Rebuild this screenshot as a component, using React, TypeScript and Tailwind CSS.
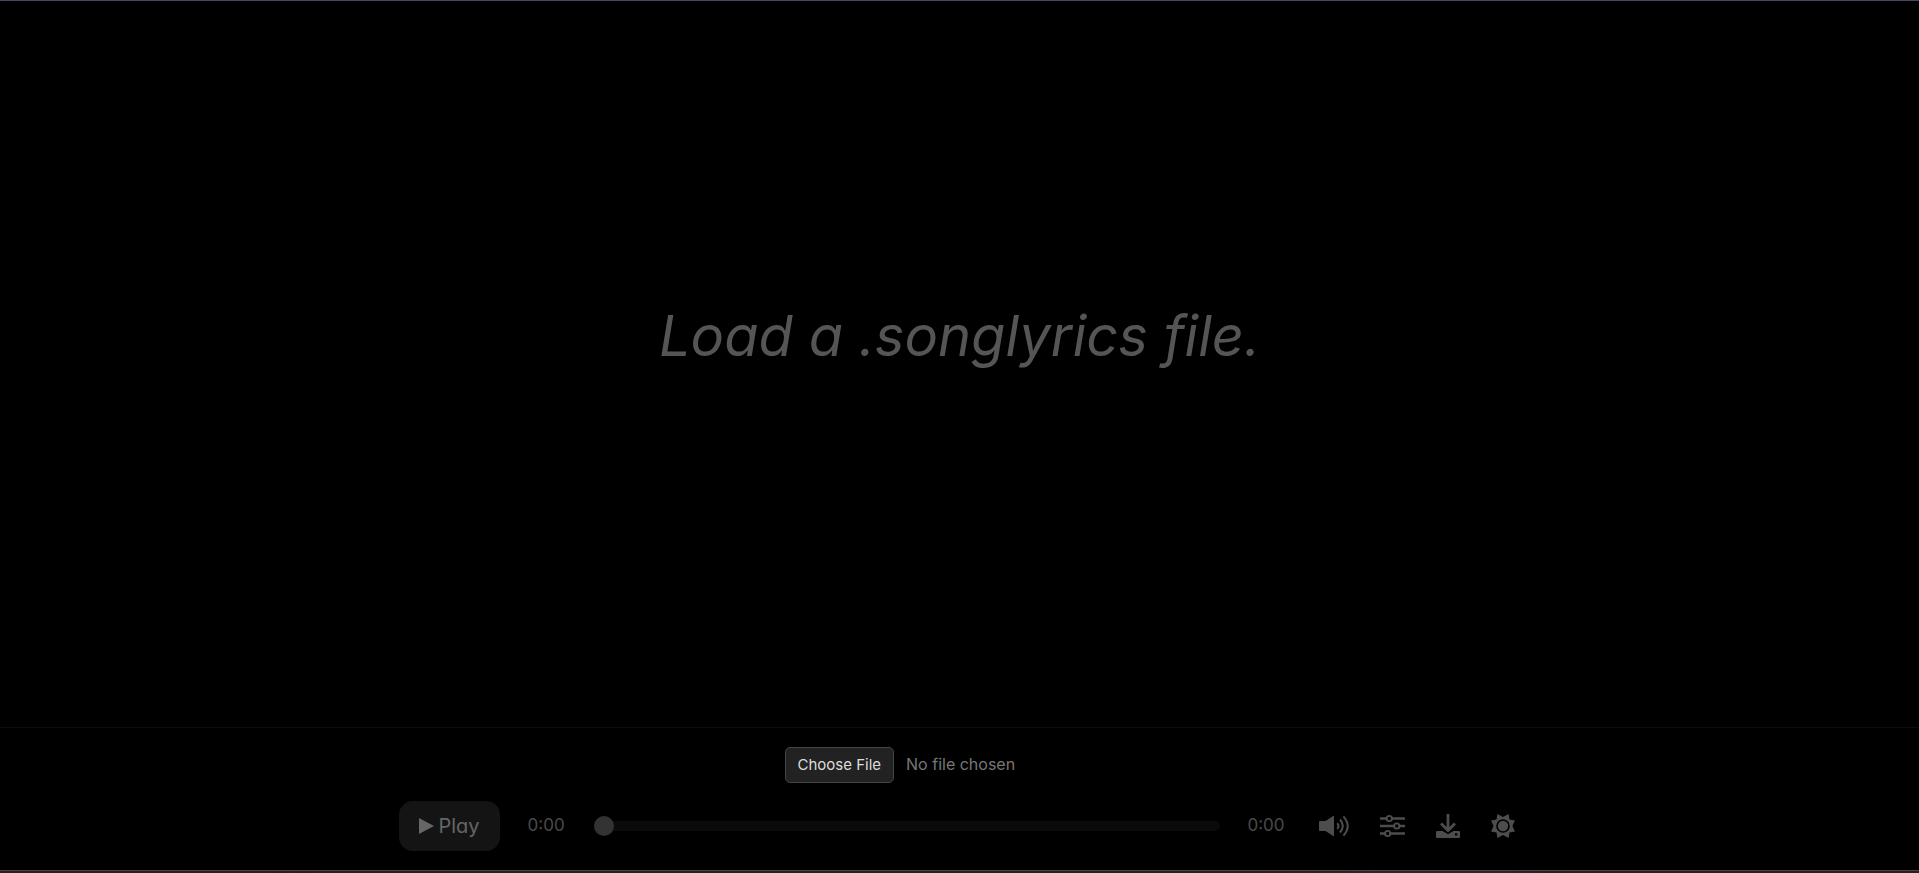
import { useState } from "react";

const iconButton = "flex h-8 items-center justify-center text-[#4d4d4d]";

function VolumeIcon() {
  return (
    <svg width="30" height="24" viewBox="0 0 30 24" fill="none" aria-hidden="true">
      <path d="M1 7h5.5L15 1.5v21L6.5 17H1q-1 0-1-1V8q0-1 1-1z" fill="currentColor" />
      <path d="M18.2 9.2q2.6 2.8 0 5.6M21 5.5q5.6 6.5 0 13M24.4 2.3q8.6 9.7 0 19.4" stroke="currentColor" strokeWidth="2" />
    </svg>
  );
}

function SlidersIcon() {
  return (
    <svg width="25" height="24" viewBox="0 0 25 24" fill="none" stroke="currentColor" aria-hidden="true">
      <path d="M1 4.5h5.5M12 4.5h12M1 12h13M19.5 12H24M1 19.5h4M10.5 19.5H24" strokeWidth="2.6" strokeLinecap="round" />
      <circle cx="9.3" cy="4.5" r="2.7" strokeWidth="1.8" />
      <circle cx="16.8" cy="12" r="2.7" strokeWidth="1.8" />
      <circle cx="7.7" cy="19.5" r="2.7" strokeWidth="1.8" />
    </svg>
  );
}

function DownloadIcon() {
  return (
    <svg width="24" height="24" viewBox="0 0 24 24" fill="none" aria-hidden="true">
      <path d="M12 0v16M5 9.5l7 7 7-7" stroke="currentColor" strokeWidth="2.8" />
      <path fillRule="evenodd" d="M1 17h5.5l5.5 3.2 5.5-3.2H23q1 0 1 1v5q0 1-1 1H1q-1 0-1-1v-5q0-1 1-1zM19 19.2v2.4h2.4v-2.4z" fill="currentColor" />
    </svg>
  );
}

function SunIcon() {
  return (
    <svg width="24" height="24" viewBox="0 0 24 24" aria-hidden="true">
      <path
        fillRule="evenodd"
        fill="currentColor"
        d="M12 3 17.6 0l.9 5.5 5.5.9L21.4 12l2.6 5.6-5.5.9-.9 5.5L12 21l-5.6 3-.9-5.5L0 17.6 2.6 12 0 6.4l5.5-.9L6.4 0zM12 5.2a6.8 6.8 0 1 0 0 13.6 6.8 6.8 0 0 0 0-13.6z"
      />
      <circle cx="12" cy="12" r="5.2" fill="currentColor" />
    </svg>
  );
}

export default function App() {
  const [position, setPosition] = useState(0);

  return (
    <div className="flex min-h-screen flex-col border-t border-[#474a5f] bg-black font-['Inter','Noto_Sans',sans-serif] [font-feature-settings:'cv11']">
      <main className="flex flex-1 items-center justify-center pb-14">
        <p className="text-[56px] leading-[84px] text-[#555] italic">Load a .songlyrics file.</p>
      </main>

      <footer className="flex flex-col items-center border-t border-[#0d0d0d] pt-[19px] pb-[19px]">
        <input
          type="file"
          aria-label="Songlyrics file"
          className="w-[350px] text-[16px] text-[#777] file:mr-3 file:h-9 file:rounded-[5px] file:border file:border-solid file:border-[#444] file:bg-[#222] file:px-3 file:text-[15px] file:text-[#ddd]"
        />
        <div className="mt-[18px] flex w-full max-w-[1122px] items-center">
          <button type="button" className="flex h-[50px] items-center gap-[5px] rounded-[14px] bg-[#141414] px-5 text-[20px] text-[#666]">
            <svg width="15" height="16" viewBox="0 0 15 16" aria-hidden="true">
              <path d="M0 0 15 8 0 16z" fill="currentColor" />
            </svg>
            Play
          </button>
          <span className="ml-7 w-[38px] text-[17px] text-[#4a4a4a]">0:00</span>
          <input
            type="range"
            aria-label="Position"
            min={0}
            max={100}
            value={position}
            onChange={(event) => setPosition(Number(event.target.value))}
            className="mx-7 h-[10px] min-w-0 flex-1 appearance-none rounded-full bg-[#0a0a0a] [&::-webkit-slider-thumb]:size-5 [&::-webkit-slider-thumb]:appearance-none [&::-webkit-slider-thumb]:rounded-full [&::-webkit-slider-thumb]:bg-[#333]"
          />
          <span className="w-[38px] text-[17px] text-[#4a4a4a]">0:00</span>
          <div className="ml-[33px] flex items-center gap-[31px] pr-[6px]">
            <button type="button" aria-label="Volume" className={iconButton}><VolumeIcon /></button>
            <button type="button" aria-label="Mixer" className={iconButton}><SlidersIcon /></button>
            <button type="button" aria-label="Download" className={iconButton}><DownloadIcon /></button>
            <button type="button" aria-label="Theme" className={iconButton}><SunIcon /></button>
          </div>
        </div>
      </footer>
      <div className="h-[3px] border-t border-[#4a4541] bg-[linear-gradient(90deg,#2b1d17_0%,#2b1d17_14%,#22251a_25%,#22251a_62%,#2f201c_67%,#2a242a_72%,#2a242a_78%,#2b1d17_84%,#2b1d17_100%)]" />
    </div>
  );
}
